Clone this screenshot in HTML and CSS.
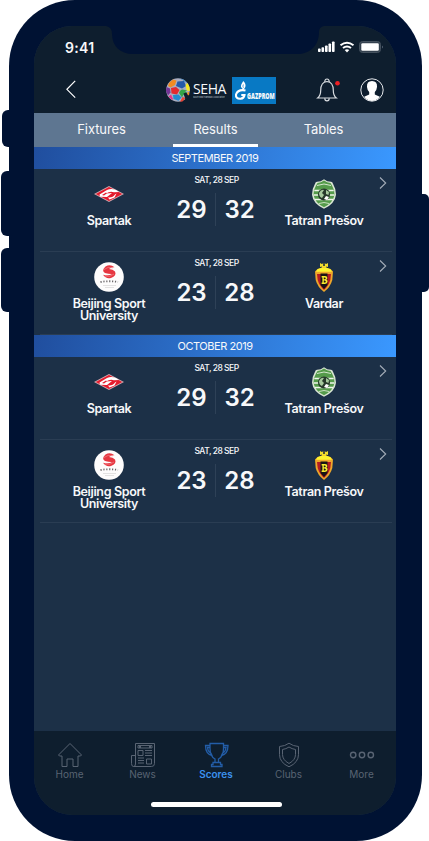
FILE: index.html
```html
<!DOCTYPE html>
<html lang="en">
<head>
<meta charset="utf-8">
<title>Scores</title>
<link rel="stylesheet" href="styles.css">
</head>
<body>
<svg class="defs" aria-hidden="true">
  <symbol id="spartak" viewBox="0 0 30 30">
    <path d="M0 15 15 7l15 8-15 8z" fill="#d3a8b0"/>
    <path d="M1.800 15 15 8l13.200 7L15 22z" fill="#e41b2d"/>
    <path d="M5.500 15.500 13 11q4-2 9 0l3 2-5 .2q-4-1.500-8 1.300l6-.5-5 4-7-.2z" fill="#fff"/>
    <path d="M14 18.500q5 .5 7-3l1.500-1-2 4-5 2z" fill="#fff"/>
    <path d="m8 16 4-2.500 1 .8-3 2.200z" fill="#e41b2d"/>
  </symbol>
  <symbol id="tatran" viewBox="0 0 30 30">
    <path d="M15 .2q3 2.500 7 2.500 1.500 0 2 2 3 5 3 11-1 9-12 14.100Q4 24.700 3 15.700q0-6 3-11 .5-2 2-2 4 0 7-2.500z" fill="#d9e5d3"/>
    <path d="M15 1.500q3 2.300 6.500 2.500l1.500 2.500q2.500 4 2.500 9-1 8-10.500 12.700Q5.500 23.500 4.500 15.500q0-5 2.500-9L8.500 4q3.500-.2 6.500-2.500z" fill="#559b4b"/>
    <path d="M8 6.500q7-3 14 0" fill="none" stroke="#d5e7cf" stroke-width="1"/>
    <path d="M5.300 11.500h19.400M4.700 16h20.600M6 20.500h18" stroke="#eef5ea" stroke-width="1.600"/>
    <circle cx="15" cy="15.500" r="6" fill="#26392b"/>
    <path d="M10 14q2-4 5-3l-2 3 2 2-2 3q-3-1-3-5zM17 11l3 2-.5 3-2.500-1z" fill="#a6c99e"/>
    <path d="m15 20 2-3 3 1-2 3z" fill="#fff"/>
    <path d="M10 24.500q5-2 10 0" fill="none" stroke="#c8e0bf"/>
  </symbol>
  <symbol id="beijing" viewBox="0 0 30 30">
    <circle cx="15" cy="15" r="14.800" fill="#fdfcfc"/>
    <path d="M20.500 5.200Q16 1.500 11.500 4.500 7 8.500 11 11q4 1.200 7 1-3 2.200-9 .8 3 4.500 8 3.200 6-2.500 4-6.500-2-2.500-6-2.500 2-2 5.500-1.800z" fill="#e63640"/>
    <path d="M10 7.500q4-3.500 9-1.500M11 14q5 1.500 9-2" fill="none" stroke="#f7a1a3" stroke-width=".5"/>
    <path d="M6.500 20q8.500-1.500 17.500 0" fill="none" stroke="#6a6668" stroke-width="1.800" stroke-dasharray="1.200 1.700"/>
    <path d="M9 23.500h13M11 25.500h9" stroke="#dcdadb" stroke-width=".8"/>
  </symbol>
  <symbol id="vardar" viewBox="0 0 30 30">
    <path d="m11 1 1.800 1L15 1l2.200 1L19 1v4l-2-.5L18 7h-6l1-2.500-2 .5z" fill="#f3df2c"/>
    <path d="M14 1h2v3h-2z" fill="#4b5138"/>
    <path d="M8.500 7Q15 4 21.500 7l2.500 2.500-.7 8.500Q21.500 25 15 30 8.500 25 6.700 18L6 9.500z" fill="#eea72a"/>
    <path d="M8.500 7.200Q15 4.500 21.500 7.200l1.500 2.600H7z" fill="#fcf42e"/>
    <path d="M8 12h14l-.7 6q-1.500 5.500-6.300 10-4.800-4.500-6.300-10z" fill="#b41c24"/>
    <path d="M11.500 11.500h7v11.500L15 27l-3.500-4z" fill="#181415"/>
    <path d="M12.600 14H16q2.500 0 2.300 2 0 1.200-1 1.600 1.400.6 1.300 2-.1 2.400-2.600 2.400h-3.400v-1.500h.8v-5h-.8zm2.200 1.400v1.800h.9q1-.1 1-.9t-1-.9zm0 3v2.100h1q1-.1 1-1t-1-1.100z" fill="#f9ec2e"/>
  </symbol>
  <symbol id="next" viewBox="0 0 8 14">
    <path d="m1 1.500 5.700 5.500L1 12.500" fill="none" stroke="#a4adb8" stroke-width="1.100"/>
  </symbol>
</svg>
<main class="phone">
  <i class="key key-mute"></i><i class="key key-up"></i><i class="key key-down"></i><i class="key key-power"></i>
  <div class="screen">
    <svg class="notch" viewBox="0 0 218 28"><path d="M0 0h218q-5 1-5 6c0 14-9 22-22 22H27C14 28 6 20 6 8Q6 1 0 0z"/></svg>
    <header class="top">
      <div class="status">
        <span class="time">9:41</span>
        <svg class="signals" viewBox="0 0 68 14">
          <g fill="#fff">
            <rect x="0" y="8.500" width="2.600" height="3.500" rx=".8"/><rect x="3.500" y="7.200" width="2.600" height="4.800" rx=".8"/><rect x="7" y="5.500" width="2.600" height="6.500" rx=".8"/><rect x="10.500" y="3.500" width="2.600" height="8.500" rx=".8"/><rect x="14" y="1.500" width="2.600" height="10.500" rx=".8"/>
          </g>
          <path d="M22.500 5.300q6.500-5.200 13 0M25 8q4-3 8 0" fill="none" stroke="#fff" stroke-width="2"/>
          <path d="M26.700 10q2.300-1.400 4.600 0L29 12.400z" fill="#fff"/>
          <rect x="41.500" y="1.500" width="21" height="11" rx="3" fill="#34414f" stroke="#45525f"/>
          <rect x="43.300" y="3.300" width="17.500" height="7.400" rx="1.300" fill="#fff"/><path d="M64 5.500q2 1.500 0 3z" fill="#536170"/>
        </svg>
      </div>
      <div class="bar">
        <svg class="back" viewBox="0 0 10 19"><path d="M9.200.9.900 9.300l8.300 8.400" fill="none" stroke="#fff" stroke-width="1.200"/></svg>
        <div class="brand">
          <svg class="ball" viewBox="0 0 26 26">
            <circle cx="13" cy="13" r="11.800" fill="#a9adc0"/>
            <path d="m4 6 4-3.500 3.500 1L10 8 5.500 10.500 3 9z" fill="#f28b20"/>
            <path d="M12.500 4.500 19 4l2 5-4 2.500-6-2.500z" fill="#245aa9"/>
            <path d="m14 1.200 5 1.500 3 3-2-.8-2-1.700z" fill="#3889c8"/>
            <path d="m20.500 8 2-2 2 4 .3 4-3-.5z" fill="#f6ea20"/>
            <path d="m1.500 10 3.500 1.500.5 4-2.500 3-2-4.500z" fill="#733395"/>
            <path d="m6 11 5-1 3.500 3-2.500 4.500-5.500-1z" fill="#e4292f"/>
            <path d="m3.500 19.500 2.500-2 2 4.500-1 1z" fill="#e6348c"/>
            <path d="m8 18 5.500-.5 3 3-3 3.300-5-1.800z" fill="#238bd0"/>
            <path d="m17.500 20 3 1-3 3.500-2.500.3z" fill="#e64435"/>
            <path d="M14 16q1.500-5 6-3l2 .5-2 1.500q4 .5 1.500 2.500L23 19l-2 1.500-2.500-3-1.500 3z" fill="#33a548"/>
            <path d="m18.500 16.500 2.500-1 3.500 3.500-4 4-.8-3z" fill="#0e1e2e"/>
            <path d="m22 16 2-1.500.3 3-1.300 1z" fill="#f28a22"/>
          </svg>
          <div class="seha"><b>SEHA</b><small>South East Handball Association</small></div>
          <div class="gazprom">
            <svg viewBox="0 0 13 19"><path d="M11.500 9.500Q4 8 2 13.500q-.5 4.500 4.500 4.300 3.500-.5 4-3.800H7.300" fill="none" stroke="#fff" stroke-width="2.100"/><path d="M9.300 0q3 3 2 6L9.500 9 7 6Q6.500 4 9.300 0z" fill="#fff"/><path d="M9.400 3.500q-1 1.800 0 3.200" fill="none" stroke="#0879c4" stroke-width=".7"/></svg>
            <span>GAZPROM</span>
          </div>
        </div>
        <svg class="bell" viewBox="0 0 24 24"><g fill="none" stroke="#d9dde1" stroke-width="1.200"><path d="M1.700 20q3-2.500 3-7.500 0-8.500 6.300-9 6.300.5 6.300 9 0 5 3 7.500z"/><path d="M8.800 4q0-3 2.200-3t2.200 3M8.800 20.200q0 2.600 2.200 2.600t2.200-2.600"/></g><circle cx="21.500" cy="5.200" r="2.300" fill="#ed2024"/></svg>
        <svg class="avatar" viewBox="0 0 24 24"><circle cx="12" cy="12" r="11.200" fill="#0e1e2e" stroke="#e5e8eb"/><path d="M12 3q-5.500 0-5 6 .2 3 2.200 5v2.500l-5 2.200Q7 22.500 12 23q5-.5 7.800-4.300l-5-2.200V14q2-2 2.200-5 .5-6-5-6z" fill="#fff"/></svg>
      </div>
    </header>
    <nav class="tabs"><span>Fixtures</span><span class="on">Results</span><span>Tables</span></nav>
    <section class="results">
      <h2>SEPTEMBER 2019</h2>
      <article class="match">
        <div class="team"><svg><use href="#spartak"/></svg><b>Spartak</b></div>
        <div class="result"><time>SAT, 28 SEP</time><div class="score"><b>29</b><i></i><b>32</b></div></div>
        <div class="team"><svg><use href="#tatran"/></svg><b>Tatran Prešov</b></div>
        <svg class="next"><use href="#next"/></svg>
      </article>
      <article class="match">
        <div class="team"><svg><use href="#beijing"/></svg><b>Beijing Sport<br>University</b></div>
        <div class="result"><time>SAT, 28 SEP</time><div class="score"><b>23</b><i></i><b>28</b></div></div>
        <div class="team"><svg><use href="#vardar"/></svg><b>Vardar</b></div>
        <svg class="next"><use href="#next"/></svg>
      </article>
      <h2>OCTOBER 2019</h2>
      <article class="match">
        <div class="team"><svg><use href="#spartak"/></svg><b>Spartak</b></div>
        <div class="result"><time>SAT, 28 SEP</time><div class="score"><b>29</b><i></i><b>32</b></div></div>
        <div class="team"><svg><use href="#tatran"/></svg><b>Tatran Prešov</b></div>
        <svg class="next"><use href="#next"/></svg>
      </article>
      <article class="match">
        <div class="team"><svg><use href="#beijing"/></svg><b>Beijing Sport<br>University</b></div>
        <div class="result"><time>SAT, 28 SEP</time><div class="score"><b>23</b><i></i><b>28</b></div></div>
        <div class="team"><svg><use href="#vardar"/></svg><b>Tatran Prešov</b></div>
        <svg class="next"><use href="#next"/></svg>
      </article>
    </section>
    <footer class="dock">
      <nav class="menu">
        <span><svg viewBox="0 0 26 26"><path d="M1.500 13 13 1.500 24.500 13l-1 1H21v10.500h-5V17h-6v7.500H5V14H2.500z"/></svg>Home</span>
        <span><svg viewBox="0 0 26 26"><path d="M5.500 1.500h19v20q0 3-3 3h-18q-2 0-2-3v-8h4zM5.500 13v9q0 2.500-2 2.500M8 3.500h14v2.500H8zM8 8.500h5v5H8zM16.500 17h5v5h-5zM15 8.500h7M15 11h7M15 13.500h7M8 16h6M8 18.500h6M8 21h6"/><path d="M10 3.500v2.500m10-2.500v2.500" stroke-width="2"/></svg>News</span>
        <span class="on"><svg viewBox="0 0 26 26"><path d="M7 1.500h13.500v5q0 8-5 10.500v3.500h-3.500V17Q7 14.500 7 6.500zM7 3.500H2.500q0 8.500 6.500 10l-1-2.300Q5 10 4.500 5.500H7M20.500 3.500H25q0 8.500-6.500 10l1-2.300q3-1.200 3.500-5.700h-2.500M10 20.500h7.500v2H19v2H8.500v-2H10z"/></svg>Scores</span>
        <span><svg viewBox="0 0 26 26"><path d="M13 1.200q4 3 9.500 3.300v8q0 8-9.500 12.300Q3.500 20.500 3.500 12.500v-8Q9 4.200 13 1.200z"/><path d="M13 5q3 2 6.500 2.500v5q0 5.500-6.500 9-6.500-3.500-6.500-9v-5Q10 7 13 5z"/></svg>Clubs</span>
        <span><svg viewBox="0 0 26 26"><g stroke-width="1.400"><circle cx="4.200" cy="13" r="2.700"/><circle cx="13" cy="13" r="2.700"/><circle cx="21.800" cy="13" r="2.700"/></g></svg>More</span>
      </nav>
      <i class="home-line"></i>
    </footer>
  </div>
</main>
</body>
</html>
```
FILE: styles.css
```css
* { box-sizing: border-box; }
body { margin: 0; background: #fff; font-family: Inter, "Liberation Sans", sans-serif; color: #f7f8fa; }
svg { display: block; }
.defs { position: absolute; width: 0; height: 0; }
.phone { position: relative; width: 413px; height: 841px; margin-left: 8.500px; padding: 26px 25.500px; background: #001233; border-radius: 66px; }
.key { position: absolute; background: #001233; border-radius: 6px 0 0 6px; }
.key-mute { left: -6.500px; top: 110px; width: 12px; height: 37px; }
.key-up { left: -7.500px; top: 171px; width: 12px; height: 65px; }
.key-down { left: -7.500px; top: 248px; width: 12px; height: 64px; }
.key-power { right: -7.500px; top: 194px; width: 12px; height: 98px; border-radius: 0 5px 5px 0; }
.screen { position: relative; width: 362px; height: 789px; display: flex; flex-direction: column; overflow: hidden; border-radius: 38px; background: #1c3047; }
.notch { position: absolute; left: 72px; top: 0; width: 218px; height: 28px; fill: #001233; }
.top { height: 87px; background: #0e1e2e; }
.status { height: 42px; display: flex; justify-content: space-between; padding: 13px 10px 0 31px; }
.time { font-size: 14px; font-weight: 600; line-height: 17px; letter-spacing: .3px; }
.signals { width: 68px; height: 14px; margin-top: 1px; }
.bar { height: 45px; display: flex; align-items: center; padding-left: 32px; }
.back { width: 10px; height: 19px; margin-top: -2px; }
.brand { display: flex; align-items: center; margin-left: 89px; margin-top: -1px; }
.ball { width: 26px; height: 26px; }
.seha { width: 36px; margin-left: 2px; }
.seha b { display: block; font: 400 14px/15px "Open Sans", sans-serif; letter-spacing: -.4px; }
.seha small { display: block; width: 200px; font-size: 8px; line-height: 8px; height: 3px; transform: scale(.26); transform-origin: 0 0; color: #bcc4cb; }
.gazprom { width: 44px; height: 27px; margin-left: 3px; padding: 4px 2px; background: #0879c4; display: flex; align-items: flex-end; }
.gazprom svg { width: 13px; height: 19px; flex: none; }
.gazprom span { font: 800 9px/8px "Open Sans", sans-serif; transform: scaleX(.6); transform-origin: 0 50%; }
.bell { width: 24px; height: 24px; margin-left: 40px; margin-top: -1px; }
.avatar { width: 24px; height: 24px; margin-left: 20px; margin-top: -2px; }
.tabs { height: 34px; flex: none; display: grid; grid-template-columns: 139px 85px 131px; grid-template-rows: 34px; background: #5e7691; font-size: 13px; line-height: 33px; text-align: center; letter-spacing: -.1px; }
.tabs span { height: 34px; }
.tabs span:first-child { padding-right: 4px; }
.tabs .on { box-shadow: inset 0 -3px #fff; }
.results { flex: 1; }
h2 { height: 22px; margin: 0; font-size: 11px; line-height: 23px; font-weight: 400; text-align: center; letter-spacing: -.45px; background: linear-gradient(100deg, #204e9e, #3a98ff); }
.match { position: relative; height: 83px; display: grid; grid-template-columns: 130px 83px 134px; padding: 0 5px 0 10px; margin: 0; }
.match::after { content: ""; position: absolute; left: 6px; right: 4px; bottom: 0; height: 1px; background: #2a3d53; }
.team { display: flex; flex-direction: column; align-items: center; padding-top: 9.500px; text-align: center; }
.team svg { width: 30px; height: 30px; }
.team b { margin-top: 6px; font-size: 12.500px; line-height: 12px; font-weight: 600; letter-spacing: -.35px; }
.result { display: flex; flex-direction: column; align-items: center; padding-top: 6px; }
time { padding-left: 2px; font-size: 8.500px; line-height: 10px; font-weight: 500; letter-spacing: -.5px; }
.score { display: flex; align-items: center; margin-top: 8px; height: 33px; gap: 8px; }
.score b { width: 31px; text-align: center; font-size: 24px; line-height: 33px; font-weight: 600; }
.score i { width: 1px; height: 33px; background: #2e4157; }
.match .next { position: absolute; right: 9.500px; top: 7px; width: 8px; height: 14px; }
.dock { height: 84px; background: #0e1e2e; }
.menu { display: grid; grid-template-columns: repeat(5, 73px); padding-top: 11px; margin-left: -1px; }
.menu span { display: flex; flex-direction: column; align-items: center; font-size: 10px; line-height: 13px; color: #596473; }
.menu svg { width: 26px; height: 26px; fill: none; stroke: #596473; stroke-width: 1; }
.menu .on { color: #3b91ed; font-weight: 600; padding-left: 1px; }
.menu .on svg { stroke: #235da7; stroke-width: 1.300; }
.home-line { display: block; width: 131px; height: 5px; margin: 21px auto 0 117px; background: #fff; border-radius: 3px; }
```
